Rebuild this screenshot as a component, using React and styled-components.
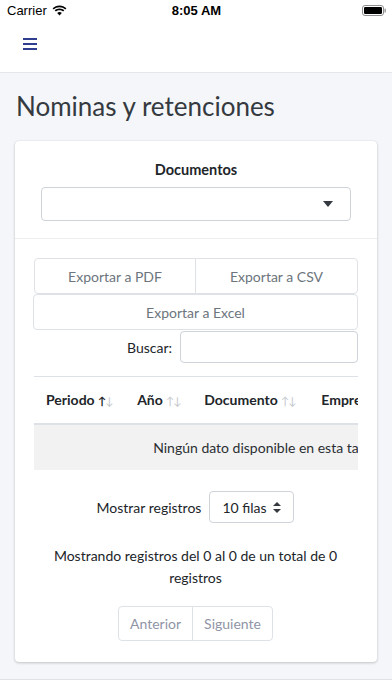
import React from 'react';
import styled, { createGlobalStyle } from 'styled-components';

const GlobalStyle = createGlobalStyle`
  * { box-sizing: border-box; }
  html, body { margin: 0; padding: 0; }
  body {
    background: #f4f6f9;
    font-family: Lato, "Noto Sans", sans-serif;
    color: #212529;
    width: 392px;
    height: 696px;
    overflow: hidden;
  }
`;

const Page = styled.div`
  display: flex;
  flex-direction: column;
  height: 696px;
`;

const TopBar = styled.header`
  background: #fff;
  border-bottom: 1px solid #e3e6ea;
  height: 73px;
  display: flex;
  flex-direction: column;
`;

const StatusBar = styled.div`
  height: 20px;
  display: grid;
  grid-template-columns: 1fr auto 1fr;
  align-items: center;
  padding: 0 6px 0 7px;
  font-family: "Liberation Sans", Arial, sans-serif;
  font-size: 13px;
  color: #000;
`;

const Carrier = styled.div`
  display: flex;
  align-items: center;
  gap: 5px;
`;

const Clock = styled.div`
  font-weight: 700;
  font-size: 13px;
`;

const Battery = styled.div`
  justify-self: end;
  display: flex;
  align-items: center;
`;

const NavRow = styled.div`
  flex: 1;
  display: flex;
  align-items: center;
  padding-left: 23px;
  padding-bottom: 4px;
`;

const Content = styled.main`
  padding: 0 15px;
  flex: 1;
`;

const Title = styled.h1`
  font-size: 26px;
  font-weight: 400;
  color: #343a40;
  margin: 18px 0 19px 1px;
  line-height: 1.2;
`;

const Card = styled.section`
  background: #fff;
  border-radius: 4px;
  box-shadow: 0 0 1px rgba(0, 0, 0, 0.13), 0 1px 3px rgba(0, 0, 0, 0.2);
`;

const CardHeader = styled.div`
  border-bottom: 1px solid #eceef0;
  padding: 20px 26px 17px;
  display: flex;
  flex-direction: column;
  align-items: center;
`;

const FieldLabel = styled.label`
  font-weight: 700;
  font-size: 14.5px;
  margin-bottom: 9px;
`;

const SelectBox = styled.div`
  width: 100%;
  height: 34px;
  border: 1px solid #ced4da;
  border-radius: 4px;
  display: flex;
  align-items: center;
  justify-content: flex-end;
  padding-right: 17px;
`;

const CardBody = styled.div`
  padding: 19px 19px 21px 18px;
`;

const ButtonRow = styled.div`
  display: grid;
  grid-template-columns: ${props => props.cols || '1fr'};
  margin-left: ${props => props.shift || '0'};
`;

const ExportButton = styled.button`
  height: 36px;
  background: #fff;
  border: 1px solid #dee2e6;
  border-radius: ${props => props.radius || '0'};
  margin-left: ${props => (props.joined ? '-1px' : '0')};
  font-family: inherit;
  font-size: 14px;
  color: #6c757d;
`;

const SearchRow = styled.div`
  display: flex;
  justify-content: flex-end;
  align-items: center;
  gap: 8px;
  margin-top: 1px;
`;

const SearchLabel = styled.span`
  font-size: 14px;
  color: #212529;
`;

const SearchInput = styled.div`
  width: 178px;
  height: 32px;
  border: 1px solid #ced4da;
  border-radius: 4px;
`;

const TableWrap = styled.div`
  margin-top: 13px;
  margin-left: 1px;
  overflow: hidden;
`;

const Table = styled.table`
  width: 462px;
  border-collapse: collapse;
  font-size: 14px;
`;

const Th = styled.th`
  text-align: left;
  white-space: nowrap;
  font-weight: 700;
  padding: 12px 9px 11px 12px;
  border-top: 1px solid #dee2e6;
  border-bottom: 2px solid #dee2e6;
  line-height: 22px;
`;

const Sort = styled.span`
  margin-left: 3px;
  font-size: 11px;
  font-weight: 400;
  letter-spacing: -1px;
`;

const Arrow = styled.span`
  font-weight: ${props => (props.active ? 700 : 400)};
  color: ${props => (props.active ? '#212529' : '#c3c7cc')};
`;

const EmptyCell = styled.td`
  background: #f2f2f2;
  text-align: center;
  white-space: nowrap;
  padding: 12px;
  height: 46px;
  border-top: 1px solid #dee2e6;
  color: #2b2f33;
`;

const LengthRow = styled.div`
  display: flex;
  justify-content: center;
  align-items: center;
  gap: 8px;
  margin-top: 21px;
  font-size: 14px;
`;

const SmallSelect = styled.div`
  width: 85px;
  height: 32px;
  border: 1px solid #ced4da;
  border-radius: 4px;
  display: flex;
  align-items: center;
  justify-content: space-between;
  padding: 0 12px 0 12px;
`;

const Info = styled.p`
  text-align: center;
  font-size: 14px;
  line-height: 22px;
  margin: 22px 8px 0;
`;

const Pager = styled.div`
  display: flex;
  justify-content: center;
  margin-top: 17px;
`;

const PageButton = styled.span`
  height: 35px;
  display: flex;
  align-items: center;
  padding: 0 11px;
  border: 1px solid #dee2e6;
  margin-left: ${props => (props.first ? '0' : '-1px')};
  border-radius: ${props => (props.first ? '4px 0 0 4px' : '0 4px 4px 0')};
  color: #8f94a6;
  font-size: 14px;
`;

const Footer = styled.footer`
  margin-top: 16px;
  height: 17px;
  background: #fff;
  border-top: 1px solid #dee2e6;
`;

const columns = ['Periodo', 'Año', 'Documento', 'Empresa', 'Archivo'];

const App = () => (
  <Page>
    <GlobalStyle />
    <TopBar>
      <StatusBar>
        <Carrier>
          Carrier
          <svg width="15" height="11" viewBox="0 0 15 11">
            <path d="M7.5 2.2c2.2 0 4.2.9 5.7 2.3l1.2-1.3C12.6 1.5 10.2.4 7.5.4S2.4 1.5.6 3.2l1.2 1.3C3.3 3.1 5.3 2.2 7.5 2.2z" fill="#000" />
            <path d="M7.5 5.2c1.4 0 2.6.5 3.6 1.4l1.2-1.3C11 4.1 9.3 3.4 7.5 3.4S4 4.1 2.7 5.3l1.2 1.3c1-.9 2.2-1.4 3.6-1.4z" fill="#000" />
            <path d="M7.5 7c-.9 0-1.6.3-2.3.9L7.5 10.5l2.3-2.6C9.1 7.3 8.4 7 7.5 7z" fill="#000" />
          </svg>
        </Carrier>
        <Clock>8:05 AM</Clock>
        <Battery>
          <svg width="24" height="11" viewBox="0 0 24 11">
            <rect x="0.5" y="0.5" width="21" height="10" rx="2.5" fill="none" stroke="#8e8e93" />
            <rect x="2" y="2" width="18" height="7" rx="1.2" fill="#000" />
            <rect x="22.5" y="3.5" width="1.3" height="4" rx="0.6" fill="#8e8e93" />
          </svg>
        </Battery>
      </StatusBar>
      <NavRow>
        <svg width="14" height="12" viewBox="0 0 14 12">
          <rect x="0" y="0" width="14" height="2" fill="#2f3e8e" />
          <rect x="0" y="5" width="14" height="2" fill="#2f3e8e" />
          <rect x="0" y="10" width="14" height="2" fill="#2f3e8e" />
        </svg>
      </NavRow>
    </TopBar>

    <Content>
      <Title>Nominas y retenciones</Title>
      <Card>
        <CardHeader>
          <FieldLabel>Documentos</FieldLabel>
          <SelectBox>
            <svg width="10" height="6" viewBox="0 0 10 6">
              <path d="M0 0h10L5 6z" fill="#343a40" />
            </svg>
          </SelectBox>
        </CardHeader>

        <CardBody>
          <ButtonRow cols="1fr 1fr" shift="1px">
            <ExportButton radius="4px 0 0 4px">Exportar a PDF</ExportButton>
            <ExportButton joined radius="0 4px 4px 0">Exportar a CSV</ExportButton>
          </ButtonRow>
          <ButtonRow>
            <ExportButton radius="4px">Exportar a Excel</ExportButton>
          </ButtonRow>
          <SearchRow>
            <SearchLabel>Buscar:</SearchLabel>
            <SearchInput />
          </SearchRow>

          <TableWrap>
            <Table>
              <thead>
                <tr>
                  {columns.map((col, i) => (
                    <Th key={col}>
                      {col}
                      <Sort>
                        <Arrow active={i === 0}>↑</Arrow>
                        <Arrow>↓</Arrow>
                      </Sort>
                    </Th>
                  ))}
                </tr>
              </thead>
              <tbody>
                <tr>
                  <EmptyCell colSpan={columns.length}>Ningún dato disponible en esta tabla</EmptyCell>
                </tr>
              </tbody>
            </Table>
          </TableWrap>

          <LengthRow>
            Mostrar registros
            <SmallSelect>
              10 filas
              <svg width="8" height="11" viewBox="0 0 8 11">
                <path d="M4 0l4 4H0z" fill="#343a40" />
                <path d="M4 11l4-4H0z" fill="#343a40" />
              </svg>
            </SmallSelect>
          </LengthRow>

          <Info>Mostrando registros del 0 al 0 de un total de 0 registros</Info>

          <Pager>
            <PageButton first>Anterior</PageButton>
            <PageButton>Siguiente</PageButton>
          </Pager>
        </CardBody>
      </Card>
    </Content>
    <Footer />
  </Page>
);

export default App;
